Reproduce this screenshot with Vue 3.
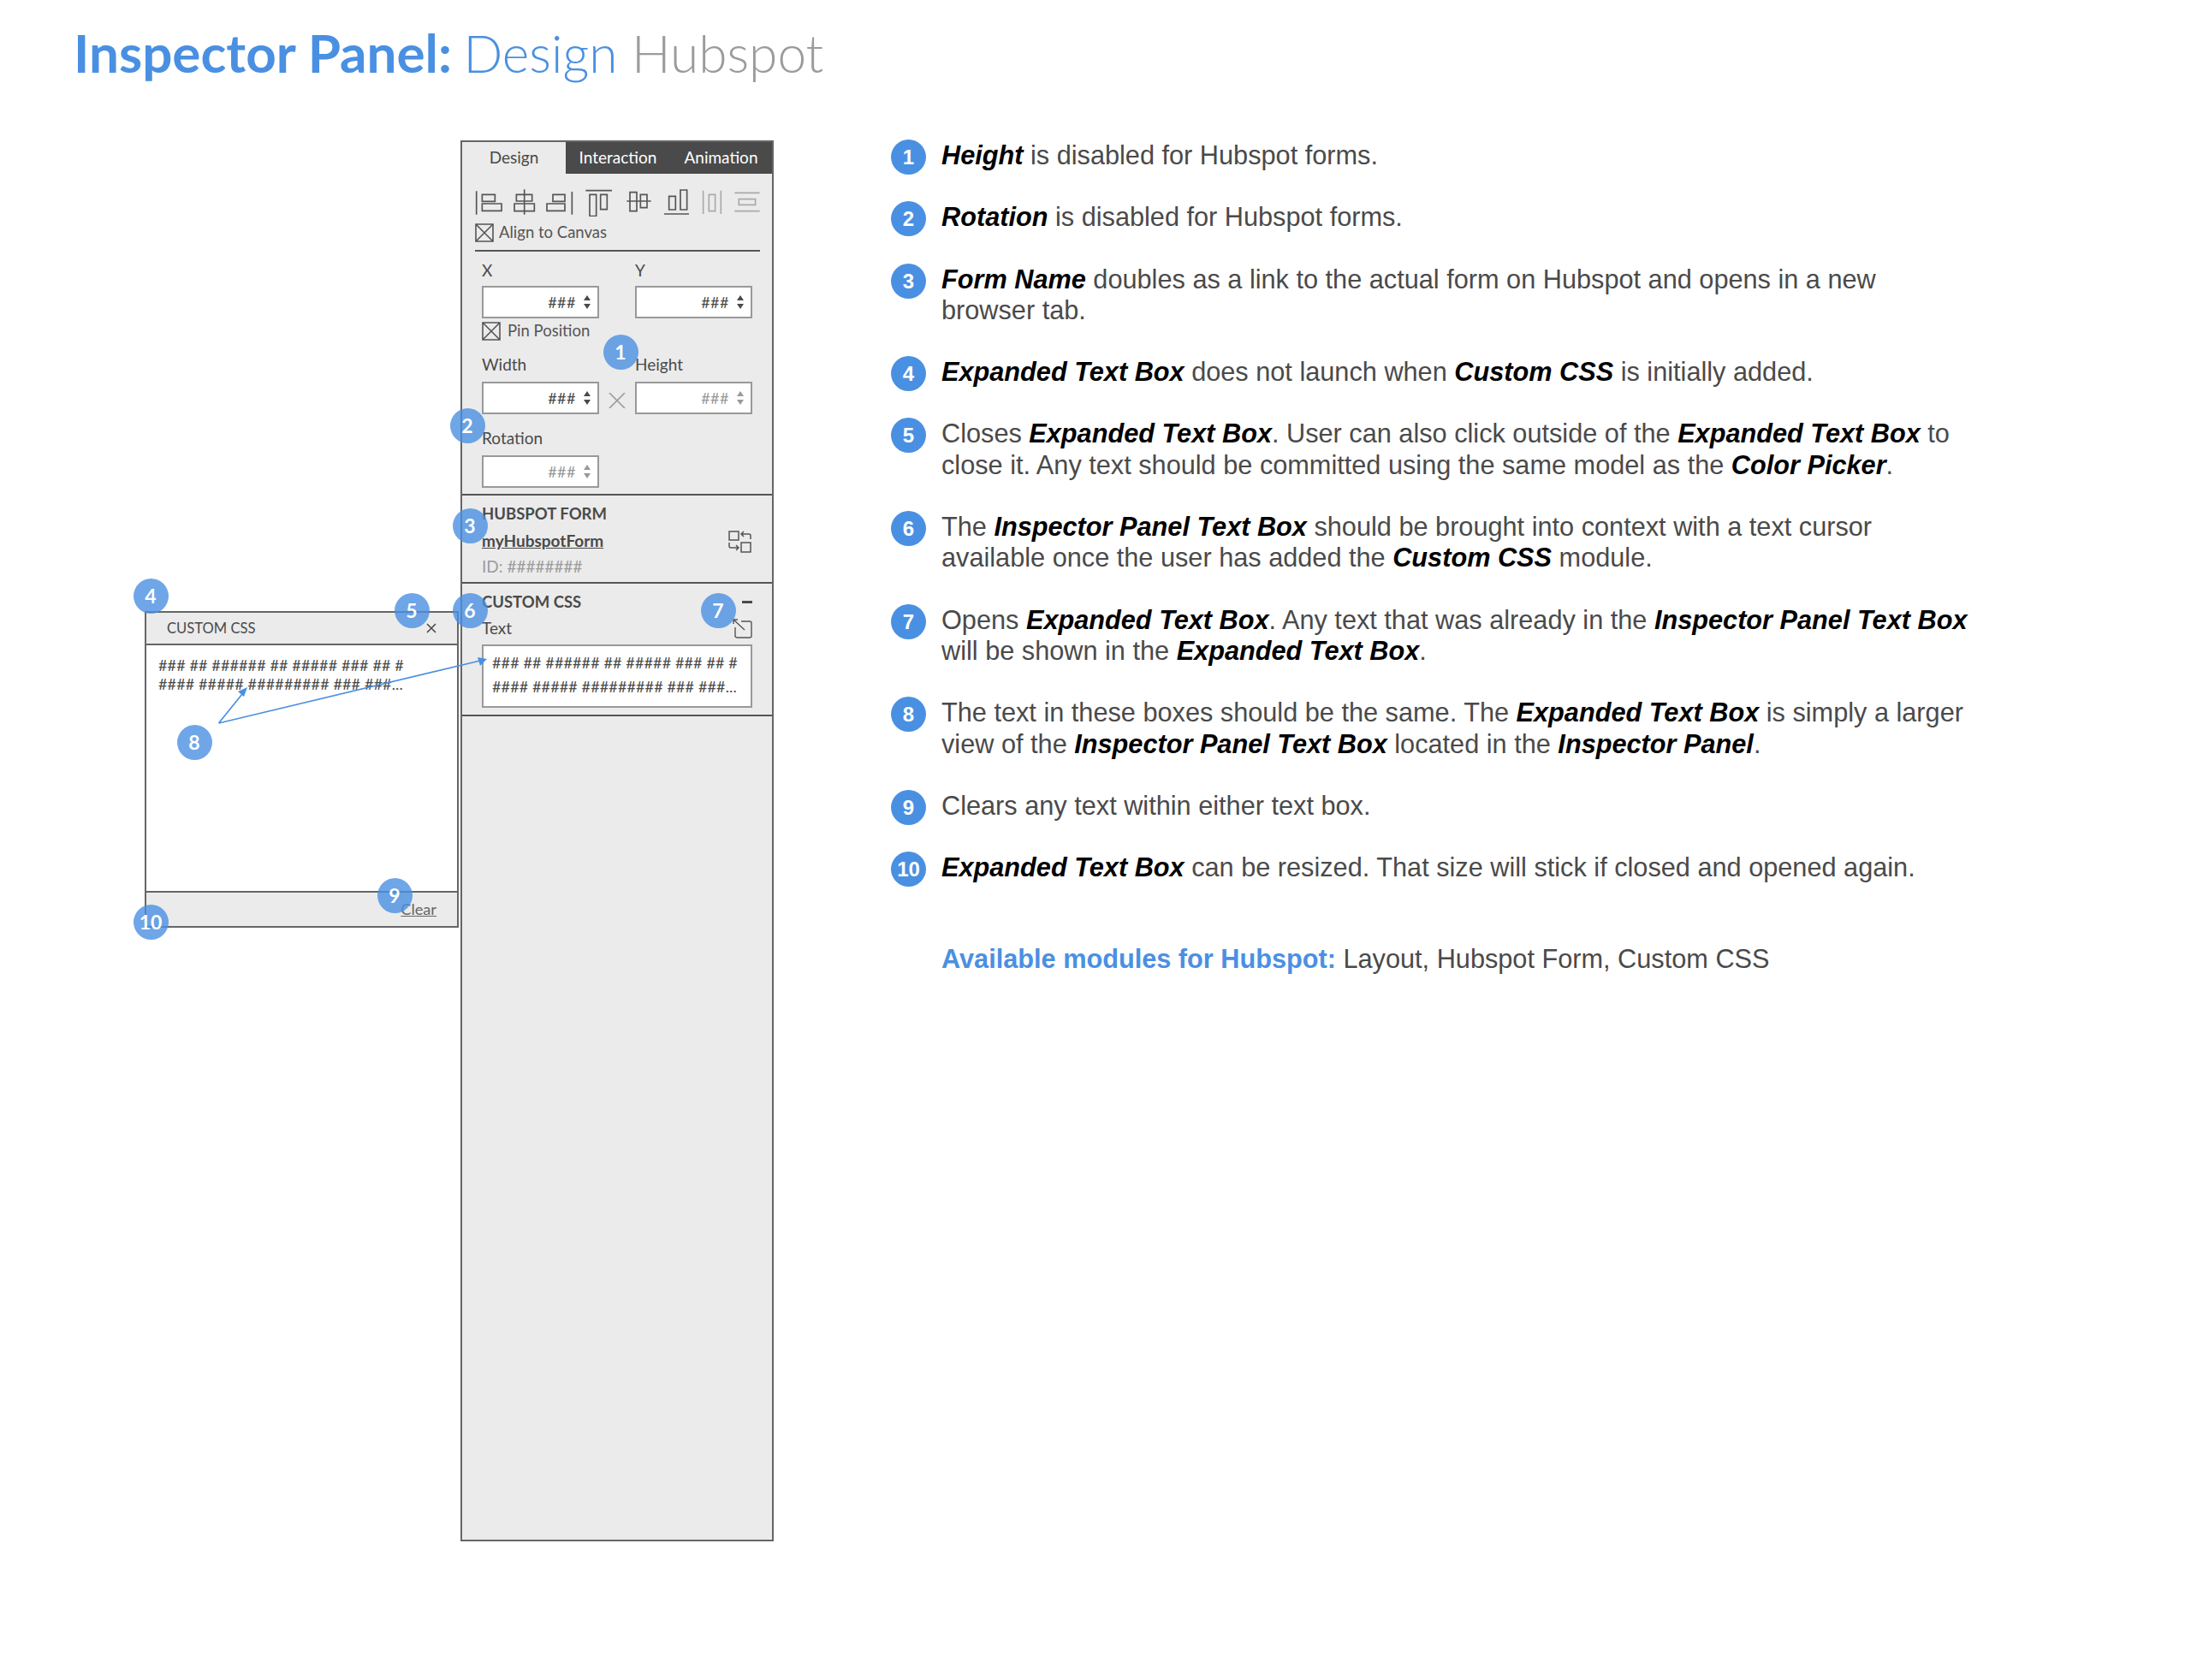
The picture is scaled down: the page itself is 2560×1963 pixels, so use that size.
<script setup>
const badges = [
  { n: 1, x: 725, y: 411 }, { n: 2, x: 546, y: 497 }, { n: 3, x: 549, y: 614 },
  { n: 4, x: 176, y: 696 }, { n: 5, x: 481, y: 713 }, { n: 6, x: 549, y: 713 },
  { n: 7, x: 839, y: 713 }, { n: 8, x: 227, y: 867 }, { n: 9, x: 461, y: 1046 },
  { n: 10, x: 176, y: 1077 }
]
const badgeStyle = b => ({ left: b.x - 20.5 - 169 + 'px', top: b.y - 20.5 - 164 + 'px' })
const notes = [
  [['b', 'Height'], ['t', ' is disabled for Hubspot forms.']],
  [['b', 'Rotation'], ['t', ' is disabled for Hubspot forms.']],
  [['b', 'Form Name'], ['t', ' doubles as a link to the actual form on Hubspot and opens in a new'], ['br'], ['t', 'browser tab.']],
  [['b', 'Expanded Text Box'], ['t', ' does not launch when '], ['b', 'Custom CSS'], ['t', ' is initially added.']],
  [['t', 'Closes '], ['b', 'Expanded Text Box'], ['t', '. User can also click outside of the '], ['b', 'Expanded Text Box'], ['t', ' to'], ['br'], ['t', 'close it. Any text should be committed using the same model as the '], ['b', 'Color Picker'], ['t', '.']],
  [['t', 'The '], ['b', 'Inspector Panel Text Box'], ['t', ' should be brought into context with a text cursor'], ['br'], ['t', 'available once the user has added the '], ['b', 'Custom CSS'], ['t', ' module.']],
  [['t', 'Opens '], ['b', 'Expanded Text Box'], ['t', '. Any text that was already in the '], ['b', 'Inspector Panel Text Box'], ['br'], ['t', 'will be shown in the '], ['b', 'Expanded Text Box'], ['t', '.']],
  [['t', 'The text in these boxes should be the same. The '], ['b', 'Expanded Text Box'], ['t', ' is simply a larger'], ['br'], ['t', 'view of the '], ['b', 'Inspector Panel Text Box'], ['t', ' located in the '], ['b', 'Inspector Panel'], ['t', '.']],
  [['t', 'Clears any text within either text box.']],
  [['b', 'Expanded Text Box'], ['t', ' can be resized. That size will stick if closed and opened again.']]
]
</script>

<template>
  <div class="page">
    <h1 class="title"><b>Inspector Panel:</b> <span class="t-blue">Design</span> <span class="t-grey">Hubspot</span></h1>
    <div class="main">
      <div class="stage">
        <section class="box">
          <header class="box-head">
            <span>CUSTOM CSS</span>
            <svg class="close" width="12" height="12" viewBox="0 0 12 12"><path d="M1 1l10 10M11 1L1 11" /></svg>
          </header>
          <div class="box-body">### ## ###### ## ##### ### ## #<br>#### ##### ######### ### ###...</div>
          <footer class="box-foot"><u>Clear</u></footer>
        </section>

        <aside class="panel">
          <nav class="tabs">
            <span class="tab active">Design</span>
            <span class="tab t2">Interaction</span>
            <span class="tab t3">Animation</span>
          </nav>
          <div class="sec design">
            <svg class="align-icons" width="335" height="33.33" viewBox="105 210 1005 100" fill="none" stroke="#555" stroke-width="5">
              <path d="M110 220v82M130 232h45v24h-45zM130 264h68v25h-68z" />
              <path d="M278 214v88M250 232h55v23h-55zM243 264h70v26h-70z" />
              <path d="M445 222v80M378 232h42v24h-42zM357 264h63v25h-63z" />
              <path d="M493 218h92M507 232h23v76h-23zM545 232h23v52h-23z" />
              <path d="M637 255h85M648 224h24v66h-24zM685 232h23v46h-23z" />
              <path d="M768 300h87M785 238h23v47h-23zM825 216h23v69h-23z" />
              <path d="M905 218v82M967 218v82M925 232h22v58h-22zM1015 226h88M1015 290h88M1030 248h58v20h-58z" stroke="#aaa" />
            </svg>
            <label class="check-row outer">
              <svg class="check" width="22" height="22" viewBox="0 0 22 22"><path d="M1 1h20v20H1zM1 1l20 20M21 1L1 21" /></svg>
              <span>Align to Canvas</span>
            </label>
            <hr class="rule">
            <div class="fields">
              <div class="row">
                <div class="field"><span class="lab">X</span>
                  <div class="input"><span>###</span><i class="spin"></i></div></div>
                <div class="slot"></div>
                <div class="field"><span class="lab">Y</span>
                  <div class="input"><span>###</span><i class="spin"></i></div></div>
              </div>
              <label class="check-row pin">
                <svg class="check" width="22" height="22" viewBox="0 0 22 22"><path d="M1 1h20v20H1zM1 1l20 20M21 1L1 21" /></svg>
                <span>Pin Position</span>
              </label>
              <div class="row wide">
                <div class="field"><span class="lab">Width</span>
                  <div class="input"><span>###</span><i class="spin"></i></div></div>
                <div class="slot">
                  <svg width="20" height="18" viewBox="0 0 20 18"><path d="M1 0l18 18M19 0L1 18" stroke="#999" stroke-width="1.6" fill="none" /></svg>
                </div>
                <div class="field"><span class="lab">Height</span>
                  <div class="input off"><span>###</span><i class="spin"></i></div></div>
              </div>
              <div class="row wide">
                <div class="field"><span class="lab">Rotation</span>
                  <div class="input off"><span>###</span><i class="spin"></i></div></div>
              </div>
            </div>
          </div>

          <div class="sec form">
            <div>
              <div class="sec-title">HUBSPOT FORM</div>
              <div class="form-link">myHubspotForm</div>
              <div class="form-id">ID: ########</div>
            </div>
            <svg class="swap" width="27" height="27" viewBox="0 0 27 27" fill="none" stroke="#555" stroke-width="1.5">
              <path d="M1 1h11v10H1zM15 14h11v11H15z" />
              <path d="M26 10V6q0-2-2-2h-8M18 1l-3 3 3 3M1 14v4q0 2 2 2h8M9 17l3 3-3 3" />
            </svg>
          </div>

          <div class="sec css">
            <div class="css-row">
              <span class="sec-title">CUSTOM CSS</span>
              <i class="minus"></i>
            </div>
            <div class="css-row second">
              <span class="text-lab">Text</span>
              <svg width="23" height="23" viewBox="0 0 23 23" fill="none" stroke="#555" stroke-width="1.4">
                <path d="M1 1l13 12M1 1v5M1 1h5M10 3h10q2 0 2 2v15q0 2-2 2H6q-3 0-3-2V10" />
              </svg>
            </div>
            <div class="textarea">### ## ###### ## ##### ### ## #<br>#### ##### ######### ### ###...</div>
          </div>
        </aside>

        <svg class="leader" width="400" height="120" viewBox="0 0 400 120">
          <path d="M86.5 85 L118 46 M86.5 85 L392 12" stroke="#4a90e2" stroke-width="1.7" fill="none" />
          <path d="M120 43l-11 5 7 6zM400 10l-11-2 3 10z" fill="#4a90e2" />
        </svg>

        <span v-for="b in badges" :key="b.n" class="badge" :style="badgeStyle(b)">{{ b.n }}</span>
      </div>

      <div class="notes">
        <ol class="list">
          <li v-for="(note, i) in notes" :key="i" class="note">
            <span class="dot">{{ i + 1 }}</span>
            <p>
              <template v-for="(s, j) in note" :key="j">
                <br v-if="s[0] === 'br'">
                <b v-else-if="s[0] === 'b'">{{ s[1] }}</b>
                <template v-else>{{ s[1] }}</template>
              </template>
            </p>
          </li>
        </ol>
        <p class="avail"><b>Available modules for Hubspot:</b> Layout, Hubspot Form, Custom CSS</p>
      </div>
    </div>
  </div>
</template>

<style>
html, body { margin: 0; background: #fff; }
</style>

<style scoped>
.page { width: 2560px; height: 1963px; box-sizing: border-box; padding: 24px 0 0 86px; background: #fff; font-family: Lato, "Open Sans", sans-serif; color: #4a4a4a; overflow: hidden; }
.title { margin: 0; height: 74px; font-size: 60.4px; line-height: 74px; font-weight: 300; white-space: nowrap; }
.title b { font-weight: 700; font-size: 62px; color: #4a90e2; margin-right: -3px; }
.t-blue { color: #4a90e2; }
.t-grey { color: #9b9b9b; }
.main { display: flex; margin-top: 66px; margin-left: 83px; align-items: flex-start; }
.stage { position: relative; display: flex; width: 735px; flex: none; align-items: flex-start; }

.box { box-sizing: border-box; width: 367px; height: 370px; margin-top: 550px; border: 2px solid #666; display: flex; flex-direction: column; background: #fff; }
.box-head { height: 38px; flex: none; box-sizing: border-box; display: flex; align-items: center; justify-content: space-between; padding: 0 24px 0 24px; background: #ebebeb; border-bottom: 2px solid #666; font-size: 16.6px; }
.close path { stroke: #4a4a4a; stroke-width: 1.6; fill: none; }
.box-body { flex: 1; padding: 12px 0 0 14px; font-size: 18px; line-height: 22px; letter-spacing: .13px; white-space: nowrap; }
.box-foot { height: 41px; flex: none; box-sizing: border-box; background: #ebebeb; border-top: 2px solid #666; text-align: right; padding: 9px 24px 0 0; font-size: 18.2px; line-height: 20px; color: #666; }

.panel { box-sizing: border-box; width: 366px; height: 1637px; margin-left: 2px; border: 2px solid #666; background: #ebebeb; font-size: 19px; }
.tabs { display: flex; height: 37px; background: #4a4a4a; color: #fff; font-size: 19px; line-height: 36px; }
.tab { text-align: center; }
.tab.active { width: 121px; background: #ebebeb; color: #4a4a4a; }
.t2 { width: 122px; }
.t3 { width: 119px; }

.sec { box-sizing: border-box; border-bottom: 2px solid #555; padding-left: 23px; }
.design { height: 376px; padding: 17px 0 0 15px; }
.align-icons { display: block; }
.check-row { display: flex; align-items: center; gap: 6px; height: 22px; line-height: 20px; color: #555; font-size: 18.5px; }
.check-row span { padding-bottom: 2px; }
.check path { fill: none; stroke: #555; stroke-width: 1.6; }
.outer { margin-top: 8px; }
.rule { border: 0; height: 2px; background: #555; margin: 9px 0 0; width: 333px; }
.fields { padding-left: 8px; }
.row { display: flex; margin-top: 12px; }
.row.wide { margin-top: 18px; }
.field { width: 137px; }
.slot { width: 42px; display: flex; justify-content: center; align-items: flex-end; padding-bottom: 7px; box-sizing: border-box; }
.lab { display: block; height: 20px; line-height: 20px; margin-bottom: 8px; }
.row.wide .lab { margin-bottom: 10px; }
.input { box-sizing: border-box; height: 38px; border: 2px solid #999; background: #fff; display: flex; align-items: center; justify-content: flex-end; gap: 9px; padding-right: 7px; font-size: 18px; letter-spacing: .5px; color: #4a4a4a; }
.input.off { color: #999; }
.spin { position: relative; display: block; width: 9px; height: 16px; }
.spin::before, .spin::after { content: ""; position: absolute; left: 0; border-left: 4.5px solid transparent; border-right: 4.5px solid transparent; }
.spin::before { top: 0; border-bottom: 6.5px solid currentColor; }
.spin::after { bottom: 0; border-top: 6.5px solid currentColor; }
.pin { margin-top: 4px; gap: 8px; }

.form { height: 103px; padding-top: 11px; padding-right: 24px; display: flex; justify-content: space-between; align-items: flex-start; }
.sec-title { line-height: 20px; font-weight: 700; font-size: 18.5px; color: #4a4a4a; }
.form-link { margin-top: 12px; line-height: 20px; font-weight: 700; text-decoration: underline; }
.form-id { margin-top: 10px; line-height: 20px; color: #9b9b9b; }
.swap { margin-top: 30px; }

.css { height: 155px; padding-top: 11px; padding-right: 23px; }
.css-row { display: flex; justify-content: space-between; align-items: center; height: 20px; }
.second { margin-top: 11px; }
.minus { display: block; width: 12px; height: 3px; background: #4a4a4a; }
.text-lab { line-height: 20px; }
.textarea { box-sizing: border-box; height: 74px; margin-top: 9px; border: 2px solid #999; background: #fff; padding: 5px 0 0 10px; font-size: 18px; line-height: 28px; letter-spacing: .13px; white-space: nowrap; }

.leader { position: absolute; left: 0; top: 596px; }
.badge { position: absolute; width: 41px; height: 41px; border-radius: 50%; background: rgba(74, 144, 226, .8); color: #fff; font-size: 23px; font-weight: 700; line-height: 41px; text-align: center; }

.notes { margin-left: 137px; font-family: "Liberation Sans", Arial, sans-serif; font-size: 30.7px; line-height: 36.3px; color: #4a4a4a; white-space: nowrap; }
.list { list-style: none; margin: 0; padding: 0; }
.note { display: flex; gap: 18px; margin-bottom: 36px; }
.note p { margin: 0; }
.note b { font-weight: 700; font-style: italic; color: #000; }
.dot { flex: none; width: 41px; height: 41px; margin: -1px 0 -6px; border-radius: 50%; background: #4a90e2; color: #fff; font-size: 24px; font-weight: 700; line-height: 41px; text-align: center; }
.avail { margin: 71px 0 0 59px; }
.avail b { color: #4a90e2; }
</style>
